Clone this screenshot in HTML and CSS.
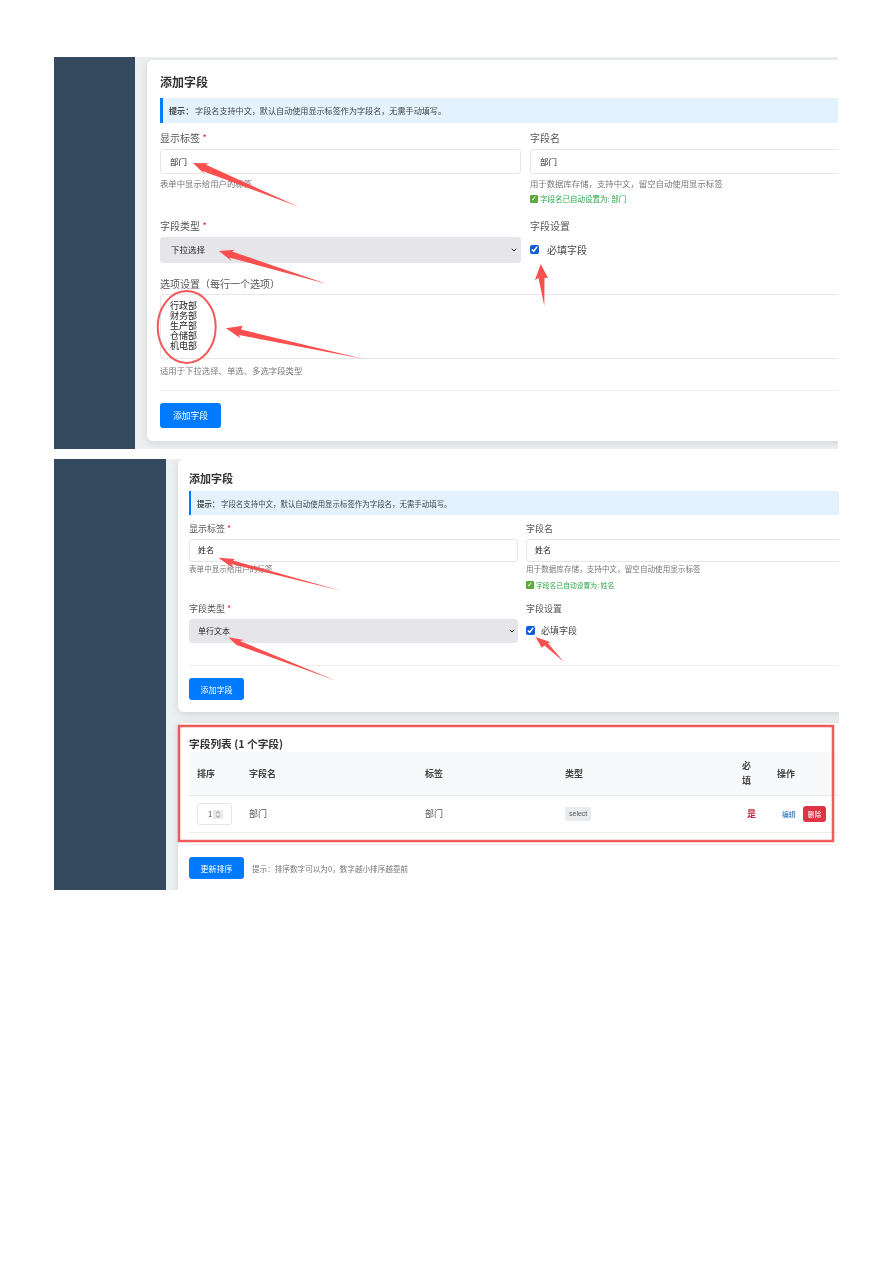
FILE: index.html
```html
<!DOCTYPE html>
<html lang="zh-CN">
<head>
<meta charset="utf-8">
<title>添加字段</title>
<link rel="stylesheet" href="styles.css">
</head>
<body>
<div class="page">
  <section class="shot shot-a">
    <aside class="sidebar"></aside>
    <main class="main">
      <div class="card">
        <h2 class="title">添加字段</h2>
        <div class="alert"><b>提示：</b> 字段名支持中文，默认自动使用显示标签作为字段名，无需手动填写。</div>
        <div class="grid">
          <div class="field">
            <label class="label">显示标签 <span class="req">*</span></label>
            <input class="control" type="text" value="部门">
            <div class="help">表单中显示给用户的标签</div>
          </div>
          <div class="field">
            <label class="label">字段名</label>
            <input class="control" type="text" value="部门">
            <div class="help">用于数据库存储，支持中文，留空自动使用显示标签</div>
            <div class="ok"><span class="tick">✓</span>字段名已自动设置为: 部门</div>
          </div>
          <div class="field">
            <label class="label">字段类型 <span class="req">*</span></label>
            <select class="control picker"><option>下拉选择</option></select>
          </div>
          <div class="field">
            <label class="label">字段设置</label>
            <label class="check"><input class="box" type="checkbox" checked><span>必填字段</span></label>
          </div>
        </div>
        <div class="options">
          <label class="label">选项设置（每行一个选项）</label>
          <textarea class="area">行政部
财务部
生产部
仓储部
机电部</textarea>
          <div class="help">适用于下拉选择、单选、多选字段类型</div>
        </div>
        <hr class="rule">
        <button class="btn" type="button">添加字段</button>
      </div>
    </main>
  </section>

  <section class="shot shot-b">
    <aside class="sidebar"></aside>
    <main class="main">
      <div class="card">
        <h2 class="title">添加字段</h2>
        <div class="alert"><b>提示：</b> 字段名支持中文，默认自动使用显示标签作为字段名，无需手动填写。</div>
        <div class="grid">
          <div class="field">
            <label class="label">显示标签 <span class="req">*</span></label>
            <input class="control" type="text" value="姓名">
            <div class="help">表单中显示给用户的标签</div>
          </div>
          <div class="field">
            <label class="label">字段名</label>
            <input class="control" type="text" value="姓名">
            <div class="help">用于数据库存储，支持中文，留空自动使用显示标签</div>
            <div class="ok"><span class="tick">✓</span>字段名已自动设置为: 姓名</div>
          </div>
          <div class="field">
            <label class="label">字段类型 <span class="req">*</span></label>
            <select class="control picker"><option>单行文本</option></select>
          </div>
          <div class="field">
            <label class="label">字段设置</label>
            <label class="check"><input class="box" type="checkbox" checked><span>必填字段</span></label>
          </div>
        </div>
        <hr class="rule">
        <button class="btn" type="button">添加字段</button>
      </div>
      <div class="card list">
        <h3 class="list-title">字段列表 (1 个字段)</h3>
        <table class="table">
          <thead>
            <tr>
              <th class="c-sort">排序</th>
              <th class="c-name">字段名</th>
              <th class="c-label">标签</th>
              <th class="c-type">类型</th>
              <th class="c-req">必填</th>
              <th>操作</th>
            </tr>
          </thead>
          <tbody>
            <tr>
              <td>
                <div class="num-wrap">
                  <input class="num" type="text" value="1">
                  <svg class="spin" viewBox="0 0 10 9" aria-hidden="true"><path d="M3 3.4 5 1.6l2 1.8M3 5.6l2 1.8 2-1.8"/></svg>
                </div>
              </td>
              <td>部门</td>
              <td>部门</td>
              <td><span class="badge">select</span></td>
              <td class="yes">是</td>
              <td class="actions"><a class="edit">编辑</a><button class="del" type="button">删除</button></td>
            </tr>
          </tbody>
        </table>
        <hr class="rule list-rule">
        <div class="foot">
          <button class="btn" type="button">更新排序</button>
          <span class="hint">提示：排序数字可以为0，数字越小排序越靠前</span>
        </div>
      </div>
    </main>
  </section>

  <svg class="marks" viewBox="0 0 893 1263" aria-hidden="true">
    <g class="arrow">
      <polygon points="193,163 209.2,163.2 206,164.8 299,207 202.5,171 204.6,174.2"/>
      <polygon points="219,251 235,249.7 232,251.5 327,284 229.3,257.5 231.6,261.1"/>
      <polygon points="540.7,264 548,278 544.5,277.7 544.3,306 538.5,278 535,280"/>
      <polygon points="226,328.3 242.7,325.7 241,329.5 364,359 239,335 240,338"/>
      <polygon points="218.3,557.7 235,559 233,560.5 342,591 231.3,564 233.3,568.3"/>
      <polygon points="228.3,637.3 244,640 240,641 336,680.7 236.8,645 240,648.3"/>
      <polygon points="535.7,637 550.7,642.3 547.8,643 563.7,661.7 544.5,645.5 541.7,647.7"/>
    </g>
    <ellipse class="ring" cx="186.7" cy="327" rx="29" ry="36"/>
    <rect class="ring frame" x="179" y="726" width="654" height="115"/>
  </svg>
</div>
</body>
</html>
```
FILE: styles.css
```css
* { box-sizing: border-box; }
html, body { margin: 0; background: #fff; }
body { font-family: "Noto Sans CJK SC", "Liberation Sans", sans-serif; color: #333; }

.page { position: relative; width: 893px; height: 1263px; padding: 57px 0 0 54px; overflow: hidden; filter: blur(.3px); }
.shot { display: flex; overflow: hidden; background: #ecf0f1; }
.shot-a { width: 784px; height: 392px; margin-bottom: 10px; }
.shot-b { width: 785px; height: 431px; }
.sidebar { flex: none; background: #34495e; }
.shot-a .sidebar { width: 81px; }
.shot-b .sidebar { width: 112px; }
.main { flex: 1; min-width: 0; padding-left: 12px; }
.shot-a .main { padding-top: 3px; }

.card { margin-right: -30px; background: #fff; border-radius: 6px; box-shadow: 0 2px 8px rgba(0, 0, 0, .12); }
.shot-a .card { padding: 13px 13px 13px 13px; }
.shot-b .card { padding: 10px 11px 12px 11px; }
.shot-b .card.list { margin-top: 11px; padding-top: 14px; border-radius: 6px 6px 0 0; }

.title { margin: 0; font-weight: 700; color: #333; line-height: 18px; }
.shot-a .title { font-size: 12px; }
.shot-b .title { font-size: 11px; }

.alert { display: flex; align-items: center; white-space: pre; background: #e3f2fd; border-left: 3px solid #007bff; color: #444; }
.alert b { font-weight: 700; }
.shot-a .alert { margin-top: 7px; height: 25px; padding-left: 6px; font-size: 8.1px; }
.shot-b .alert { margin-top: 4px; height: 24px; padding-left: 6px; font-size: 7.45px; border-left-width: 2px; }

.grid { display: grid; }
.shot-a .grid { grid-template-columns: 361px 1fr; column-gap: 9px; row-gap: 14px; margin-top: 8px; }
.shot-b .grid { grid-template-columns: 329px 1fr; column-gap: 8px; row-gap: 11px; margin-top: 7px; }

.label { display: block; line-height: 14px; color: #555; }
.shot-a .label { font-size: 10px; margin-bottom: 4px; }
.shot-b .label { font-size: 9px; margin-bottom: 3px; }
.req { color: #dc3545; }

.control { display: block; width: 100%; margin: 0; background: #fff; border: 1px solid #e4e6e8; border-radius: 3px; color: #222; font-family: inherit; }
.shot-a .control { height: 25px; padding: 0 9px 2px; font-size: 8.5px; }
.shot-b .control { height: 23px; padding: 0 8px 2px; font-size: 8px; }
.control.picker {
  appearance: none;
  background-color: #e6e6ea;
  background-image: url("data:image/svg+xml,%3Csvg xmlns='http://www.w3.org/2000/svg' viewBox='0 0 6 4'%3E%3Cpath d='M.8.8 3 3l2.2-2.2' fill='none' stroke='%23222' stroke-width='1'/%3E%3C/svg%3E");
  background-repeat: no-repeat;
  background-size: 6px 4px;
  border-color: #e6e6ea;
}
.shot-a .control.picker { height: 26px; padding: 0 10px 2px; background-position: 350px 10px; }
.shot-b .control.picker { height: 24px; padding: 0 8px 2px; background-position: 319px 9px; }

.help { line-height: 12px; color: #777; }
.shot-a .help { margin-top: 3px; font-size: 8.4px; }
.shot-b .help { margin-top: 1px; font-size: 7.6px; }

.ok { display: flex; align-items: center; gap: 2px; margin-top: 4px; line-height: 12px; color: #28a745; }
.shot-a .ok { font-size: 7.5px; }
.shot-b .ok { font-size: 6.8px; }
.tick { display: inline-flex; align-items: center; justify-content: center; width: 8px; height: 8px; border-radius: 1px; background: #5fa83c; color: #fff; font-size: 7px; line-height: 1; font-family: "DejaVu Sans", sans-serif; }

.check { display: flex; align-items: center; color: #444; }
.shot-a .check { gap: 8px; height: 24px; font-size: 10px; }
.shot-b .check { gap: 6px; height: 22px; font-size: 9px; }
.box { margin: 0; width: 9px; height: 9px; accent-color: #0a5fd6; }

.options { margin-top: 14px; }
.shot-a .options .label { margin-bottom: 3px; }
.area { display: block; width: 100%; height: 65px; margin: 0; padding: 6px 9px; resize: none; overflow: hidden; background: #fff; border: 1px solid #e4e6e8; border-radius: 3px; color: #222; font-family: inherit; font-size: 9px; line-height: 10px; }
.shot-a .options .help { margin-top: 5px; }

.rule { height: 1px; margin: 0; border: 0; background: #eee; }
.shot-a .rule { margin-top: 14px; }
.shot-b .rule { margin-top: 22px; }

.btn { display: block; border: 0; border-radius: 3px; background: #007bff; color: #fff; font-family: inherit; padding: 0; }
.shot-a .btn { width: 61px; height: 25px; margin-top: 12px; font-size: 8.8px; }
.shot-b .btn { width: 55px; height: 22px; margin-top: 12px; font-size: 8px; }

.list-title { margin: 0; height: 15px; font-size: 10.7px; font-weight: 700; line-height: 13px; color: #333; }
.table { width: 669px; table-layout: fixed; border-collapse: collapse; font-size: 9px; color: #555; }
.table th { height: 43px; padding: 0 8px; text-align: left; font-weight: 700; line-height: 15px; background: #f8f9fa; border-bottom: 1px solid #e6e9eb; color: #444; }
.table td { height: 37px; padding: 0 8px; border-bottom: 1px solid #eee; }
.c-sort { width: 52px; }
.c-name { width: 176px; }
.c-label { width: 140px; }
.c-type { width: 177px; }
.c-req { width: 35px; }
.table th.c-req { padding-right: 12px; }
.num-wrap { position: relative; width: 35px; height: 22px; }
.num { display: block; width: 100%; height: 100%; padding: 0 14px 0 10px; border: 1px solid #e4e6e8; border-radius: 3px; font-family: inherit; font-size: 7.5px; color: #444; }
.spin { position: absolute; top: 7px; left: 16px; width: 10px; height: 9px; background: #e9e9ed; }
.spin path { fill: none; stroke: #777; stroke-width: .8; }
.badge { display: inline-block; height: 14px; padding: 0 4px; background: #e9ecef; border-radius: 2px; font-family: "Liberation Sans", sans-serif; font-size: 7px; line-height: 14px; color: #555; }
.table td.yes { text-align: center; color: #c9243f; font-weight: 700; }
.table td.actions { display: flex; align-items: center; padding: 0 0 0 13px; }
.edit { width: 21px; color: #0d62b8; font-size: 6.8px; }
.del { width: 23px; height: 16px; padding: 0; border: 0; border-radius: 3px; background: #dc3545; color: #fff; font-family: inherit; font-size: 6.8px; }

.shot-b .list-rule { margin-top: 11px; }
.foot { display: flex; align-items: center; gap: 8px; margin-top: 12px; }
.shot-b .foot .btn { margin-top: 0; }
.hint { font-size: 7.6px; color: #777; }

.marks { position: absolute; top: 0; left: 0; width: 893px; height: 1263px; pointer-events: none; }
.arrow polygon { fill: #f9504f; }
.ring { fill: none; stroke: #f05a5a; stroke-width: 2; }
.frame { stroke-width: 2.5; }
```
